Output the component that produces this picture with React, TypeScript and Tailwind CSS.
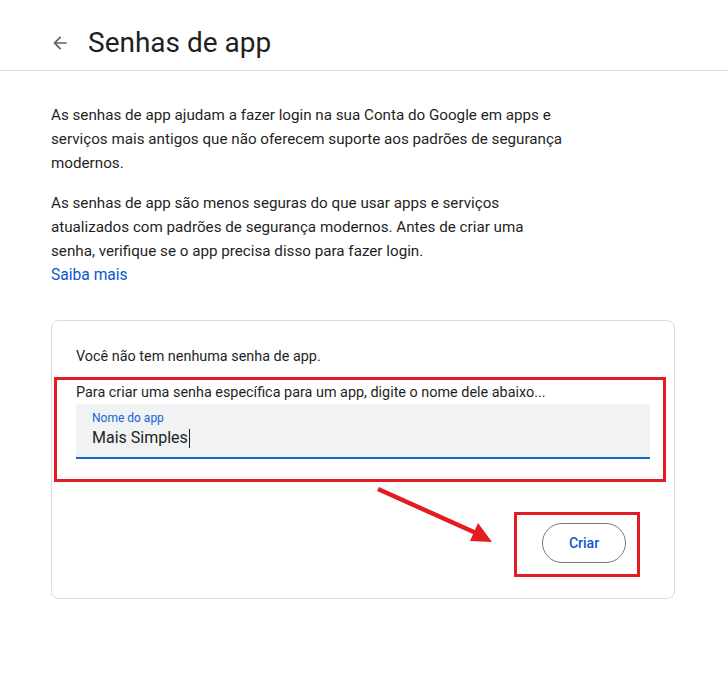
import React from "react";

const App: React.FC = () => {
  return (
    <div className="min-h-screen w-[728px] bg-white font-['Roboto',sans-serif] text-[#1f1f1f]">
      <header className="flex h-[71px] items-center border-b border-[#dadce0] pl-[50px] pt-[16px]">
        <svg width="20" height="20" viewBox="0 0 24 24" className="text-[#5f6368]">
          <path fill="currentColor" d="M20 11H7.83l5.59-5.59L12 4l-8 8 8 8 1.41-1.41L7.83 13H20v-2z" />
        </svg>
        <h1 className="ml-[18px] text-[28px] leading-[32px] text-[#1f1f1f]">Senhas de app</h1>
      </header>

      <main className="px-[51px] pt-[32px]">
        <p className="w-[528px] text-[15.2px] leading-[24px] text-[#1f1f1f]">
          As senhas de app ajudam a fazer login na sua Conta do Google em apps e serviços mais antigos que não oferecem suporte aos padrões de segurança modernos.
        </p>
        <p className="mt-[16px] w-[485px] text-[15.2px] leading-[24px] text-[#1f1f1f]">
          As senhas de app são menos seguras do que usar apps e serviços atualizados com padrões de segurança modernos. Antes de criar uma senha, verifique se o app precisa disso para fazer login.
        </p>
        <a className="block text-[15.6px] leading-[24px] text-[#0b57d0]" href="#">
          Saiba mais
        </a>

        <div className="relative mt-[33px] w-[624px] rounded-lg border border-[#dadce0] px-6 pb-[35px] pt-[26px]">
          <p className="text-[14.4px] leading-[20px] text-[#1f1f1f]">Você não tem nenhuma senha de app.</p>
          <p className="mt-[16px] text-[14.4px] leading-[20px] text-[#1f1f1f]">
            Para criar uma senha específica para um app, digite o nome dele abaixo...
          </p>
          <div className="mt-[1px] h-[55px] rounded-t bg-[#f0f2f4] border-b-2 border-[#1a62d2] px-4 pt-[6px]">
            <div className="text-[12px] leading-[16px] text-[#1a62d2]">Nome do app</div>
            <div className="flex items-center text-[16px] leading-[24px] text-[#1f1f1f]">
              Mais Simples
              <span className="ml-[1px] inline-block h-[19px] w-px bg-[#1f1f1f]" />
            </div>
          </div>
          <div className="mt-[64px] flex justify-end pr-[24px]">
            <button className="h-[40px] w-[84px] rounded-full border border-[#747775] text-[14px] font-medium text-[#0b57d0]">
              Criar
            </button>
          </div>

          <div className="pointer-events-none absolute left-[2px] top-[56px] h-[105px] w-[612px] border-[3px] border-[#e31b23]" />
          <div className="pointer-events-none absolute left-[462px] top-[191px] h-[65px] w-[126px] border-[3px] border-[#e31b23]" />
          <svg className="pointer-events-none absolute left-[320px] top-[160px]" width="130" height="70" viewBox="0 0 130 70">
            <line x1="6" y1="8" x2="104" y2="52" stroke="#e31b23" strokeWidth="4.5" />
            <polygon points="106,42 98,60 120,61" fill="#e31b23" />
          </svg>
        </div>
      </main>
    </div>
  );
};

export default App;
